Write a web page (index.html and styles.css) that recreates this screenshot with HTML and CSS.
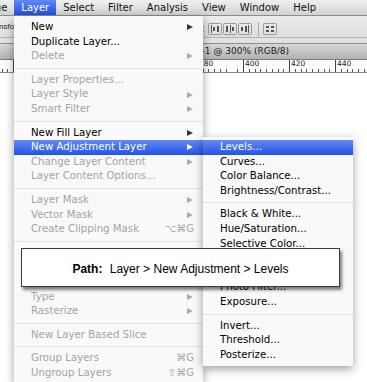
FILE: index.html
```html
<!DOCTYPE html>
<html lang="en">
<head>
    <meta charset="UTF-8">
    <title>Layer menu</title>
    <link rel="stylesheet" href="styles.css">
</head>
<body>
    <nav class="menubar">
        <span class="first">Image</span>
        <span class="active">Layer</span>
        <span>Select</span>
        <span>Filter</span>
        <span>Analysis</span>
        <span>View</span>
        <span>Window</span>
        <span>Help</span>
    </nav>

    <div class="options">
        <span class="options-label">nsform Controls</span>
        <svg class="tools" width="76" height="14" viewBox="0 0 76 14">
            <!-- align / distribute buttons -->
            <rect x="0.5" y="4" width="1" height="1.5" fill="#666"/>
            <rect x="0.5" y="8" width="1" height="1.5" fill="#666"/>
            <g fill="none" stroke="#9a9a9a" stroke-width="1">
                <rect x="6.5" y="1.5" width="13" height="11" rx="1"/>
                <rect x="21.5" y="1.5" width="13" height="11" rx="1"/>
                <rect x="36.5" y="1.5" width="13" height="11" rx="1"/>
                <rect x="61.5" y="1.5" width="13" height="11" rx="1"/>
            </g>
            <g fill="#555">
                <rect x="9" y="3" width="1" height="8"/>
                <rect x="11" y="5" width="2" height="4"/>
                <rect x="15" y="4" width="2" height="6"/>
                <rect x="24" y="4" width="2" height="6"/>
                <rect x="28" y="3" width="1" height="8"/>
                <rect x="30" y="5" width="2" height="4"/>
                <rect x="39" y="5" width="2" height="4"/>
                <rect x="43" y="4" width="2" height="6"/>
                <rect x="46" y="3" width="1" height="8"/>
                <rect x="64" y="4" width="3" height="2"/>
                <rect x="64" y="8" width="3" height="2"/>
                <rect x="69" y="4" width="3" height="2"/>
                <rect x="69" y="8" width="3" height="2"/>
            </g>
            <rect x="56" y="0" width="1" height="14" fill="#aaa"/>
        </svg>
    </div>

    <div class="workspace">
        <div class="doc-title">Untitled-1 @ 300% (RGB/8)</div>
        <div class="ruler">
            <div class="ruler-seg"><span>280</span><i></i></div>
            <div class="ruler-seg"><span>300</span><i></i></div>
            <div class="ruler-seg"><span>320</span><i></i></div>
            <div class="ruler-seg"><span>340</span><i></i></div>
            <div class="ruler-seg"><span>360</span><i></i></div>
            <div class="ruler-seg"><span>380</span><i></i></div>
            <div class="ruler-seg"><span>400</span><i></i></div>
            <div class="ruler-seg"><span>420</span><i></i></div>
            <div class="ruler-seg"><span>440</span><i></i></div>
            <div class="ruler-seg"><span>460</span><i></i></div>
        </div>
        <div class="canvas"></div>
    </div>

    <ul class="menu main-menu">
        <li>New<b class="arrow"></b></li>
        <li>Duplicate Layer...</li>
        <li class="off">Delete<b class="arrow"></b></li>
        <li class="sep"></li>
        <li class="off">Layer Properties...</li>
        <li class="off">Layer Style<b class="arrow"></b></li>
        <li class="off">Smart Filter<b class="arrow"></b></li>
        <li class="sep"></li>
        <li>New Fill Layer<b class="arrow"></b></li>
        <li class="on">New Adjustment Layer<b class="arrow"></b></li>
        <li class="off">Change Layer Content<b class="arrow"></b></li>
        <li class="off">Layer Content Options...</li>
        <li class="sep"></li>
        <li class="off">Layer Mask<b class="arrow"></b></li>
        <li class="off">Vector Mask<b class="arrow"></b></li>
        <li class="off">Create Clipping Mask<span class="key">⌥⌘G</span></li>
        <li class="sep"></li>
        <li class="off">Smart Objects<b class="arrow"></b></li>
        <li class="off">Video Layers<b class="arrow"></b></li>
        <li class="off">3D Layers<b class="arrow"></b></li>
        <li class="off">Type<b class="arrow"></b></li>
        <li class="off">Rasterize<b class="arrow"></b></li>
        <li class="sep"></li>
        <li class="off">New Layer Based Slice</li>
        <li class="sep"></li>
        <li class="off">Group Layers<span class="key">⌘G</span></li>
        <li class="off">Ungroup Layers<span class="key">⇧⌘G</span></li>
    </ul>

    <ul class="menu sub-menu">
        <li class="on">Levels...</li>
        <li>Curves...</li>
        <li>Color Balance...</li>
        <li>Brightness/Contrast...</li>
        <li class="sep"></li>
        <li>Black &amp; White...</li>
        <li>Hue/Saturation...</li>
        <li>Selective Color...</li>
        <li>Channel Mixer...</li>
        <li>Gradient Map...</li>
        <li>Photo Filter...</li>
        <li>Exposure...</li>
        <li class="sep"></li>
        <li>Invert...</li>
        <li>Threshold...</li>
        <li>Posterize...</li>
    </ul>

    <div class="tip"><b>Path:</b> Layer &gt; New Adjustment &gt; Levels</div>
</body>
</html>
```

FILE: styles.css
```css
* {
    box-sizing: border-box;
}

html, body {
    margin: 0;
}

body {
    position: relative;
    width: 367px;
    height: 382px;
    overflow: hidden;
    font-family: "DejaVu Sans", sans-serif;
    background-color: #fff;
    color: #000;
}

/* top menu bar */
.menubar {
    display: flex;
    height: 16px;
    background: linear-gradient(#f0f0f0, #d2d2d2);
    border-bottom: 1px solid #8c8c8c;
    font-size: 10px;
    line-height: 15px;
    color: #111;
    white-space: nowrap;
}

.menubar span {
    padding: 0 7px;
}

.menubar .first {
    margin-left: -31px;
}

.menubar .active {
    background: linear-gradient(#6288f2, #1f52e6);
    color: #fff;
}

/* options bar */
.options {
    display: flex;
    align-items: center;
    height: 22px;
    background: linear-gradient(#ececec, #dedede);
    border-bottom: 1px solid #b4b4b4;
}

.options-label {
    flex: 0 0 203px;
    overflow: hidden;
    white-space: nowrap;
    font: 8px "Liberation Sans", Arial, sans-serif;
    color: #222;
    margin-left: -1px;
}

.tools {
    display: block;
    margin-top: 4px;
}

/* document window */
.workspace {
    padding-top: 5px;
    background-color: #e2e2e2;
}

.doc-title {
    height: 17px;
    padding-left: 166px;
    background: linear-gradient(#d8d8d8, #b2b2b2);
    border-top: 1px solid #8e8e8e;
    border-bottom: 1px solid #7c7c7c;
    font-size: 9px;
    line-height: 15px;
    color: #1c1c1c;
    white-space: nowrap;
}

.ruler {
    display: flex;
    height: 13px;
    margin-left: -33px;
    background-color: #fdfdfd;
    border-bottom: 1px solid #8a8a8a;
}

.ruler-seg {
    display: flex;
    flex: 0 0 46px;
    flex-direction: column;
    justify-content: space-between;
    border-left: 1px solid #444;
}

.ruler-seg span {
    padding-left: 1px;
    font-size: 7.5px;
    line-height: 8px;
    color: #222;
}

.ruler-seg i {
    height: 3px;
    background: repeating-linear-gradient(to right, transparent 0 4.75px, #555 4.75px 5.75px);
}

.canvas {
    height: 320px;
    background-color: #fff;
}

/* pull-down menus */
.menu {
    position: absolute;
    margin: 0;
    padding: 4px 0 0;
    list-style: none;
    background-color: #f9f9f9;
    font-size: 10.2px;
    line-height: 14.6px;
    box-shadow: 0 3px 9px rgba(0, 0, 0, 0.38);
}

.main-menu {
    left: 14px;
    top: 16px;
    width: 189px;
    height: 366px;
}

.sub-menu {
    left: 203px;
    top: 137px;
    width: 150px;
    padding: 3px 0 4px;
}

.menu li {
    display: flex;
    align-items: center;
    justify-content: space-between;
    height: 14.6px;
    padding: 0 9px 0 17px;
    white-space: nowrap;
}

.menu li.off {
    color: #a3a3a3;
}

.menu li.on {
    background: linear-gradient(#6489f2, #2254e8);
    color: #fff;
}

.menu li.sep {
    height: 9px;
    padding: 0;
    background: linear-gradient(#e1e1e1, #e1e1e1) center / 100% 1px no-repeat;
}

.arrow {
    width: 0;
    height: 0;
    margin-right: 1px;
    border-left: 6px solid #333;
    border-top: 3.5px solid transparent;
    border-bottom: 3.5px solid transparent;
}

.off .arrow {
    border-left-color: #ababab;
}

.on .arrow {
    border-left-color: #fff;
}

.key {
    font-size: 10px;
}

/* path tooltip */
.tip {
    position: absolute;
    left: 21px;
    top: 248px;
    display: flex;
    align-items: center;
    justify-content: center;
    width: 319px;
    height: 39px;
    padding-top: 2px;
    background-color: #fff;
    border: 1px solid #3a3a3a;
    box-shadow: 2px 3px 3px rgba(0, 0, 0, 0.5);
    font: 12px "Liberation Sans", Arial, sans-serif;
    color: #000;
    white-space: pre;
}

.tip b {
    margin-right: 4px;
}
```
